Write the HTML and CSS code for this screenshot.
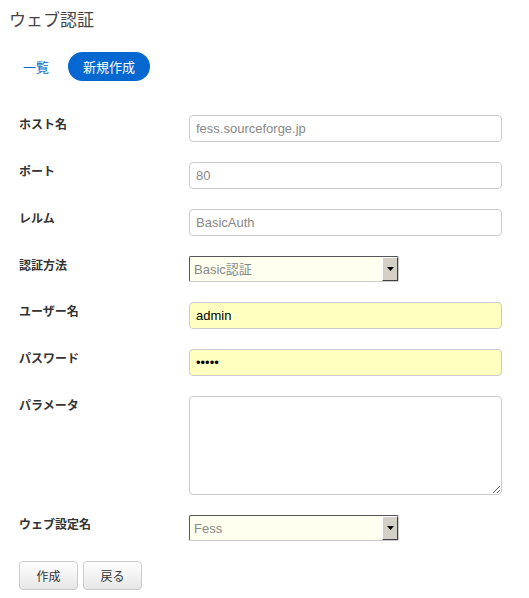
FILE: index.html
```html
<!DOCTYPE html>
<html lang="ja">
<head>
<meta charset="utf-8">
<link rel="stylesheet" href="styles.css">
</head>
<body>
<div class="page">
  <h3 class="title">ウェブ認証</h3>
  <nav class="tabs">
    <a class="tab" href="#">一覧</a>
    <a class="tab active" href="#">新規作成</a>
  </nav>
  <form class="form">
    <div class="row">
      <label class="label">ホスト名</label>
      <input class="field" type="text" value="fess.sourceforge.jp">
    </div>
    <div class="row">
      <label class="label">ポート</label>
      <input class="field" type="text" value="80">
    </div>
    <div class="row">
      <label class="label">レルム</label>
      <input class="field" type="text" value="BasicAuth">
    </div>
    <div class="row">
      <label class="label">認証方法</label>
      <div class="select">
        <select class="select-input"><option>Basic認証</option></select>
        <span class="select-arrow"><svg width="7" height="4" viewBox="0 0 7 4"><path d="M0 0H7L3.5 4Z" fill="#000"/></svg></span>
      </div>
    </div>
    <div class="row">
      <label class="label">ユーザー名</label>
      <input class="field filled" type="text" value="admin">
    </div>
    <div class="row">
      <label class="label">パスワード</label>
      <input class="field filled" type="password" value="admin">
    </div>
    <div class="row">
      <label class="label">パラメータ</label>
      <textarea class="field area"></textarea>
    </div>
    <div class="row">
      <label class="label">ウェブ設定名</label>
      <div class="select">
        <select class="select-input"><option>Fess</option></select>
        <span class="select-arrow"><svg width="7" height="4" viewBox="0 0 7 4"><path d="M0 0H7L3.5 4Z" fill="#000"/></svg></span>
      </div>
    </div>
    <div class="actions">
      <button class="btn" type="button">作成</button>
      <button class="btn" type="button">戻る</button>
    </div>
  </form>
</div>
</body>
</html>
```

FILE: styles.css
```css
html, body {
  margin: 0;
  padding: 0;
  background: #fff;
}
body {
  font-family: "Liberation Sans", "Noto Sans CJK JP", sans-serif;
  color: #333;
}
.page {
  padding: 7px 0 0 9px;
  width: 520px;
}
.title {
  margin: 0;
  font-size: 17px;
  line-height: 24px;
  font-weight: normal;
  color: #444;
  font-family: "Noto Sans CJK JP", sans-serif;
}
.tabs {
  display: flex;
  align-items: center;
  gap: 10px;
  margin: 21px 0 0 5px;
}
.tab {
  font-family: "Noto Sans CJK JP", sans-serif;
  font-size: 13px;
  line-height: 29px;
  color: #0066cc;
  text-decoration: none;
  padding: 0 9px;
  border-radius: 15px;
}
.tab.active {
  background: #0468d0;
  color: #fff;
  padding: 0 15px;
  height: 29px;
}
.form {
  margin-top: 34px;
  padding-left: 10px;
}
.row {
  display: flex;
  align-items: flex-start;
  margin-bottom: 20px;
}
.label {
  width: 170px;
  flex: none;
  font-family: "Noto Sans CJK JP", sans-serif;
  font-size: 12px;
  font-weight: bold;
  line-height: 18px;
  color: #333;
}
.field {
  box-sizing: border-box;
  width: 313px;
  height: 27px;
  margin: 0;
  border: 1px solid #ccc;
  border-radius: 4px;
  padding: 0 6px;
  font-family: "Liberation Sans", sans-serif;
  font-size: 13px;
  color: #888;
  background: #fff;
  outline: none;
}
.field.filled {
  background: #ffffc0;
  color: #000;
}
.field.area {
  height: 99px;
  resize: vertical;
}
.select {
  box-sizing: border-box;
  display: flex;
  width: 210px;
  height: 26px;
  border: 1px solid;
  border-color: #555 #ccc #ccc #555;
  border-radius: 2px;
  background: #fffff0;
}
.select-input {
  appearance: none;
  -webkit-appearance: none;
  flex: 1;
  min-width: 0;
  border: none;
  background: transparent;
  padding: 0 4px;
  font-family: "Liberation Sans", "Noto Sans CJK JP", sans-serif;
  font-size: 13px;
  color: #888;
  outline: none;
}
.select-arrow {
  flex: none;
  width: 14px;
  display: flex;
  align-items: center;
  justify-content: center;
  background: #d4d0c8;
  border-left: 1px solid #fff;
  border-top: 1px solid #fff;
  border-right: 1px solid #404040;
  border-bottom: 1px solid #404040;
}
.actions {
  display: flex;
  gap: 5px;
}
.btn {
  box-sizing: border-box;
  width: 59px;
  height: 29px;
  border: 1px solid #ccc;
  border-radius: 4px;
  background: linear-gradient(#ffffff, #e6e6e6);
  font-family: "Noto Sans CJK JP", sans-serif;
  font-size: 12px;
  color: #333;
  padding: 0;
}
```
